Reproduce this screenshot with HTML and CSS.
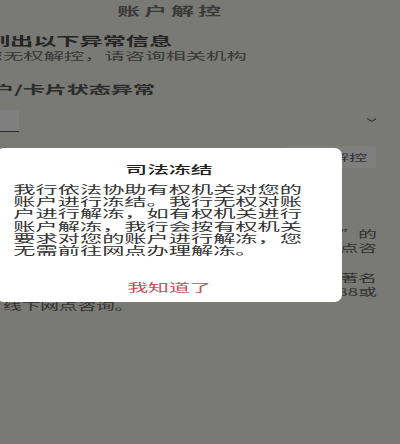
FILE: index.html
```html
<!DOCTYPE html>
<html lang="zh-CN">
<head>
<meta charset="utf-8">
<title>账户解控</title>
<link rel="stylesheet" href="styles.css">
</head>
<body>
<div class="stage">
  <div class="page">
    <header class="nav">账户解控</header>
    <section class="intro">
      <h2 class="intro-title">列出以下异常信息</h2>
      <p class="intro-sub">您无权解控，请咨询相关机构</p>
    </section>
    <h3 class="status">账户/卡片状态异常</h3>
    <div class="acct-row">
      <div class="acct-tab"><span class="acct-mark">卡</span></div>
      <svg class="chev" width="5.4" height="4" viewBox="0 0 10 4" preserveAspectRatio="none"><polyline points="0.5,0.5 5,3.4 9.5,0.5" fill="none" stroke="#5a5a5a" stroke-width="1"/></svg>
    </div>
    <div class="action-row">
      <button class="action">申请解控</button>
    </div>
    <div class="notes">
      <p class="note">
        <span class="ln">如有疑问，请联系冻结账户的“有权机关”的</span>
        <span class="ln">工作人员，或持本人有效证件前往我行网点咨</span>
        <span class="ln end">询。</span>
      </p>
      <p class="note">
        <span class="ln">如需了解冻结详情，可查看法律文书中的著名</span>
        <span class="ln">有权机关进行咨询，可拨打客服热线95588或</span>
        <span class="ln end">线下网点咨询。</span>
      </p>
    </div>
  </div>
  <div class="mask"></div>
  <div class="dialog">
    <h4 class="dialog-title">司法冻结</h4>
    <p class="dialog-body">我行依法协助有权机关对您的账户进行冻结。我行无权对账户进行解冻，如有权机关进行账户解冻，我行会按有权机关要求对您的账户进行解冻，您无需前往网点办理解冻。</p>
    <button class="dialog-btn">我知道了</button>
  </div>
</div>
</body>
</html>
```
FILE: styles.css
```css
html, body {
  margin: 0;
  padding: 0;
}
body {
  width: 400px;
  height: 444px;
  overflow: hidden;
  background: #7b7b77;
  font-family: "Noto Sans CJK SC", "Noto Sans", sans-serif;
}
.stage {
  position: relative;
  width: 210.5px;
  height: 444px;
  transform: scaleX(1.9);
  transform-origin: 0 0;
}
.page {
  margin-left: -32.5px;
  width: 243px;
  height: 444px;
  box-sizing: border-box;
  padding: 0 12.1px 0 25.6px;
  background: #f2f2ea;
}
.nav {
  margin: 0 -12.1px 0 -25.6px;
  padding-left: 2.2px;
  height: 22px;
  line-height: 22px;
  text-align: center;
  font-size: 12px;
  letter-spacing: 2.2px;
  font-weight: 700;
  color: #767676;
}
.intro {
  margin-top: 11px;
}
.intro-title {
  margin: 0;
  font-size: 12.2px;
  line-height: 16px;
  font-weight: 700;
  color: #4a4a4a;
}
.intro-sub {
  margin: 0 0 0 -2.2px;
  font-size: 10.7px;
  line-height: 14px;
  color: #707070;
}
.status {
  margin: 18px 0 0 -8.8px;
  font-size: 11.6px;
  line-height: 16px;
  font-weight: 700;
  color: #5a5a5a;
}
.acct-row {
  margin-top: 11px;
  height: 26px;
  display: flex;
  align-items: center;
  justify-content: space-between;
}
.acct-tab {
  margin-left: -3px;
  width: 20.4px;
  height: 22px;
  box-sizing: border-box;
  background: #ffffff;
  border-bottom: 1.5px solid #555;
  display: flex;
  align-items: flex-start;
  padding-top: 3px;
}
.acct-mark {
  font-size: 5px;
  line-height: 6px;
  color: #444;
}
.chev {
  display: block;
  margin-top: -3px;
}
.action-row {
  margin-top: 12px;
  display: flex;
  justify-content: flex-end;
}
.action {
  height: 22px;
  padding: 0 5.2px;
  border: none;
  border-radius: 2px / 4px;
  background: #ffffff;
  color: #666;
  font-family: inherit;
  font-size: 9.5px;
  line-height: 22px;
}
.notes {
  margin-top: 59px;
  padding-left: 8.5px;
  font-size: 9.8px;
  line-height: 14px;
  color: #666;
}
.note {
  margin: 0;
}
.note + .note {
  margin-top: 2px;
}
.ln {
  display: block;
  text-align: justify;
  text-align-last: justify;
}
.ln.end {
  text-align-last: left;
}
.mask {
  position: absolute;
  left: 0;
  top: 0;
  right: 0;
  bottom: 0;
  background: rgba(0, 0, 0, 0.5);
}
.dialog {
  position: absolute;
  left: -2.1px;
  top: 148px;
  width: 182.1px;
  box-sizing: border-box;
  padding: 13px 15px 7px 9.1px;
  background: #ffffff;
  border-radius: 4px / 7px;
}
.dialog-title {
  margin: 0 -15px 0 -9.1px;
  text-align: center;
  font-size: 11.5px;
  line-height: 16px;
  font-weight: 500;
  color: #1e1e1e;
}
.dialog-body {
  margin: 5.85px 0 0;
  font-size: 11.7px;
  line-height: 12.3px;
  color: #333;
}
.dialog-btn {
  display: block;
  margin: 22.35px -15px 0 -9.1px;
  width: calc(100% + 24.1px);
  padding: 0;
  border: none;
  background: none;
  font-family: inherit;
  text-align: center;
  font-size: 11px;
  line-height: 16px;
  color: #c44d58;
}
```
